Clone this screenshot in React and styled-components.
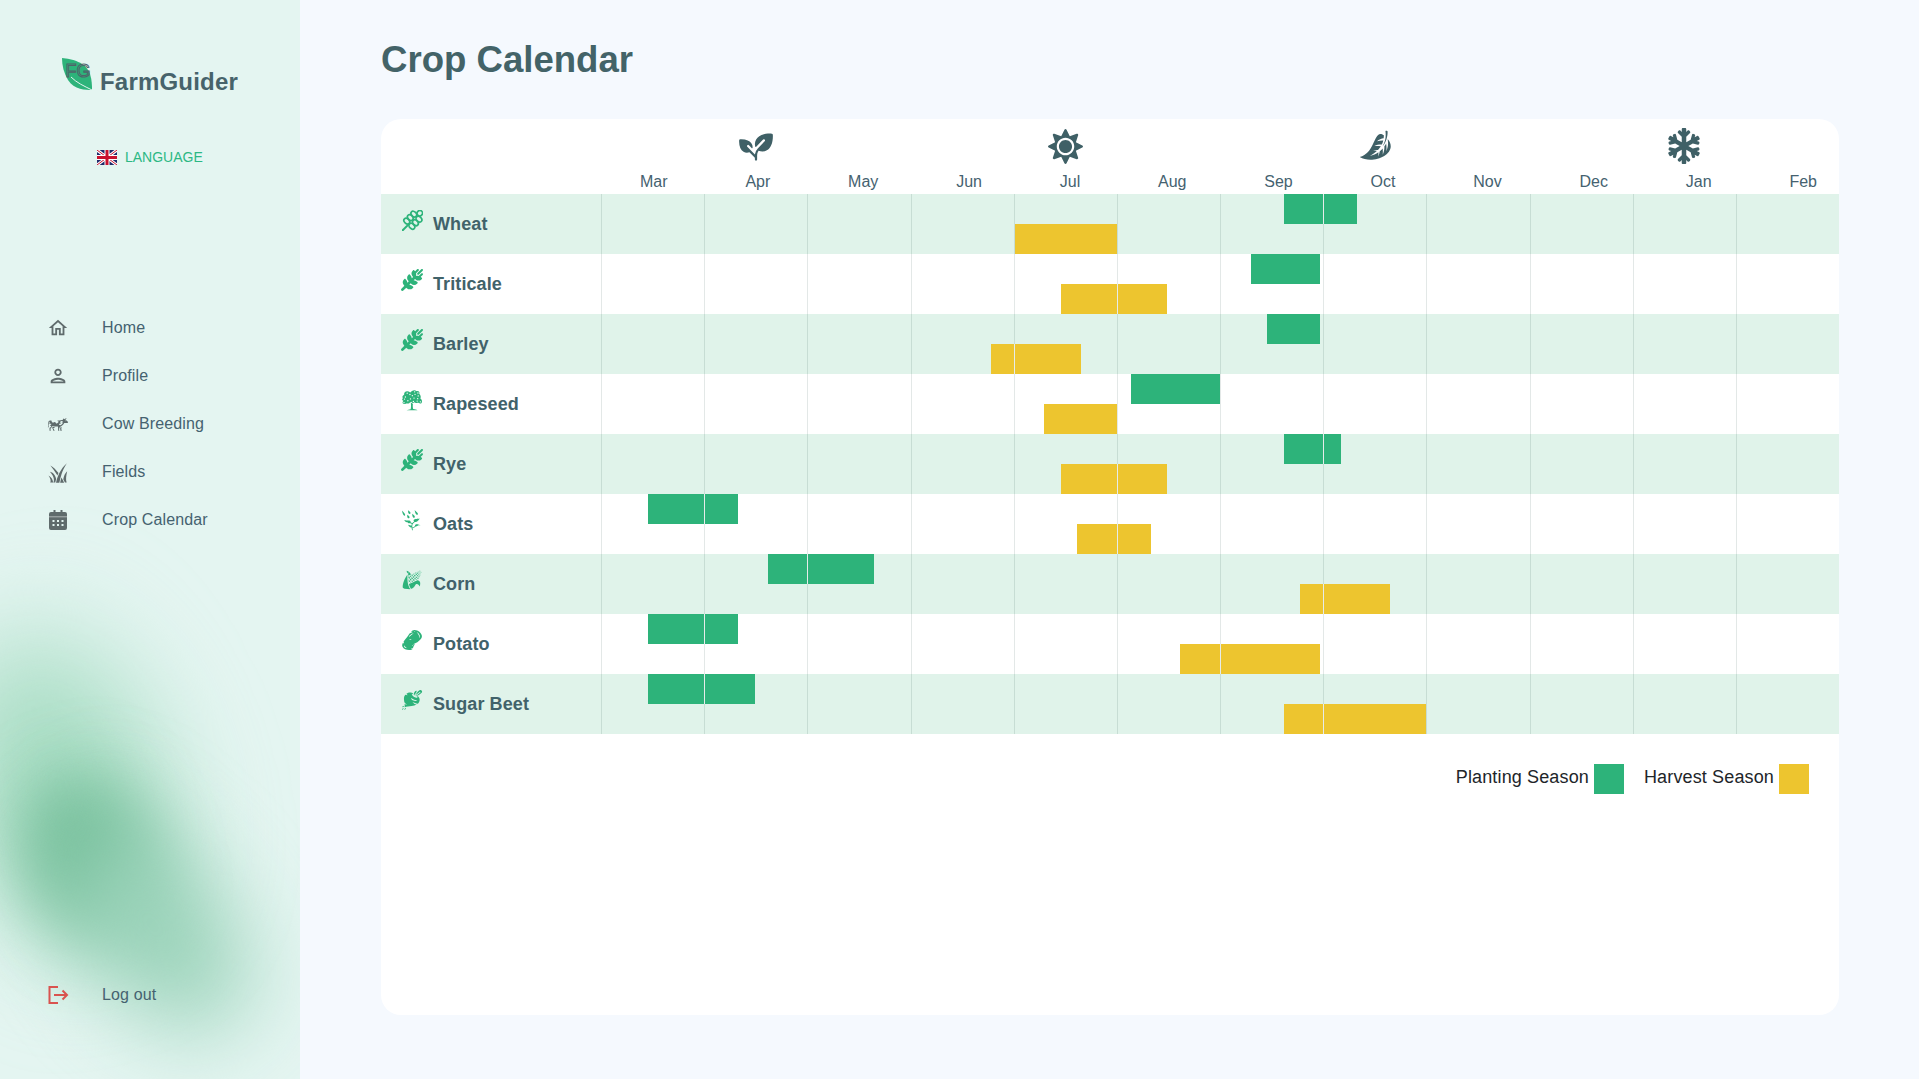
import React from 'react';
import styled, { createGlobalStyle } from 'styled-components';
import { GiCow, GiHighGrass, GiFruitTree, GiPlantWatering, GiCorn, GiPotato, GiBeet, GiFallingLeaf } from 'react-icons/gi';
import { FaSnowflake, FaSun } from 'react-icons/fa';
import { FaWheatAwn } from 'react-icons/fa6';
import { PiPlantFill } from 'react-icons/pi';
import { MdOutlineHome, MdOutlinePerson } from 'react-icons/md';

const GlobalStyle = createGlobalStyle`
  html, body { margin: 0; padding: 0; height: 100%; }
  body { background: #f5f9fe; font-family: "Liberation Sans", Arial, sans-serif; }
`;

const Page = styled.div`
  display: flex;
  width: 1919px;
  height: 1079px;
  overflow: hidden;
`;

const Sidebar = styled.aside`
  position: relative;
  flex: 0 0 300px;
  display: flex;
  flex-direction: column;
  height: 100%;
  box-sizing: border-box;
  padding-top: 58px;
  background: #e4f5f1;
  overflow: hidden;
`;

const Glow = styled.div`
  position: absolute;
  left: ${p => p.$x}px;
  top: ${p => p.$y}px;
  width: ${p => p.$w}px;
  height: ${p => p.$h}px;
  border-radius: 50%;
  background: ${p => p.$color};
  transform: rotate(${p => p.$rot}deg);
  filter: blur(${p => p.$blur}px);
`;

const Logo = styled.div`
  position: relative;
  display: flex;
  align-items: flex-end;
  gap: 8px;
  padding-left: 62px;
`;

const LogoMark = styled.svg`
  width: 30px;
  height: 32px;
  margin-bottom: 6px;
  flex: none;
`;

const LogoText = styled.span`
  font-size: 24px;
  font-weight: 700;
  letter-spacing: 0.2px;
  color: #47636b;
`;

const Language = styled.div`
  position: relative;
  display: flex;
  align-items: center;
  gap: 8px;
  margin-top: 53px;
  padding-left: 97px;
  font-size: 14px;
  line-height: 16px;
  color: #2cb884;
`;

const Nav = styled.nav`
  position: relative;
  display: flex;
  flex-direction: column;
  margin-top: 139px;
`;

const NavItem = styled.a`
  position: relative;
  display: flex;
  align-items: center;
  gap: 33px;
  height: 48px;
  padding-left: 47px;
  font-size: 16px;
  letter-spacing: 0.13px;
  color: #456270;
`;

const NavIcon = styled.span`
  display: flex;
  align-items: center;
  justify-content: center;
  width: 22px;
  height: 24px;
  color: ${p => p.$color || '#5f6b6c'};
`;

const LogoutItem = styled(NavItem)`
  margin-top: auto;
  margin-bottom: 60px;
`;

const Main = styled.main`
  flex: 1;
  min-width: 0;
  padding: 39px 80px 0 81px;
`;

const Title = styled.h1`
  margin: 0 0 39px;
  font-size: 36.6px;
  line-height: 41px;
  font-weight: 700;
  color: #436368;
`;

const Card = styled.section`
  display: flex;
  flex-direction: column;
  height: 896px;
  background: #fff;
  border-radius: 20px;
  overflow: hidden;
`;

const Head = styled.div`
  display: grid;
  grid-template-columns: 220px 1fr;
  height: 75px;
`;

const SeasonRow = styled.div`
  display: grid;
  grid-template-columns: repeat(4, 1fr);
  height: 36px;
  padding-top: 9px;
`;

const Season = styled.div`
  display: flex;
  align-items: center;
  justify-content: center;
  color: #3f6066;
`;

const MonthRow = styled.div`
  display: flex;
  justify-content: space-between;
  margin-top: 9px;
  padding: 0 22px 0 39px;
  font-size: 16px;
  line-height: 18px;
  color: #456270;
`;

const Row = styled.div`
  display: grid;
  grid-template-columns: 220px 1fr;
  height: 60px;
  background: ${p => (p.$shaded ? '#e0f3ea' : 'transparent')};
`;

const CropLabel = styled.div`
  display: flex;
  align-items: center;
  gap: 10px;
  padding-left: 20px;
  font-size: 18px;
  font-weight: 700;
  letter-spacing: 0.1px;
  color: #41626a;
`;

const CropIcon = styled.span`
  display: flex;
  align-items: center;
  justify-content: center;
  width: 22px;
  height: 22px;
  margin-bottom: 8px;
  color: #2db37a;
`;

const Timeline = styled.div`
  position: relative;
`;

const Lines = styled.div`
  position: absolute;
  inset: 0;
  display: grid;
  grid-template-columns: repeat(12, 1fr);
  padding-left: 0.1px;
`;

const LineCell = styled.div`
  border-left: 1px solid rgba(0, 50, 40, 0.11);
`;

const Lane = styled.div`
  position: relative;
  height: 30px;
`;

const Bar = styled.div`
  position: relative;
  height: 100%;
  background: ${p => (p.$kind === 'plant' ? '#2db37a' : '#edc52f')};
`;

const Tick = styled.i`
  position: absolute;
  top: 0;
  bottom: 0;
  width: 1px;
  background: #e6ecea;
`;

const Legend = styled.div`
  display: flex;
  justify-content: flex-end;
  gap: 20px;
  margin-top: 30px;
  padding-right: 30px;
`;

const LegendItem = styled.div`
  display: flex;
  align-items: flex-start;
  gap: 5px;
  font-size: 18px;
  line-height: 26px;
  letter-spacing: 0.14px;
  color: #212529;
`;

const Swatch = styled.span`
  width: 30px;
  height: 30px;
  background: ${p => (p.$kind === 'plant' ? '#2db37a' : '#edc52f')};
`;

const Flag = () => (
  <svg width="20" height="15" viewBox="0 0 60 45" aria-hidden="true">
    <rect width="60" height="45" fill="#1f2a6b" />
    <path d="M0 0L60 45M60 0L0 45" stroke="#fff" strokeWidth="9" />
    <path d="M0 0L60 45M60 0L0 45" stroke="#c8102e" strokeWidth="3" />
    <path d="M30 0V45M0 22.5H60" stroke="#fff" strokeWidth="15" />
    <path d="M30 0V45M0 22.5H60" stroke="#c8102e" strokeWidth="9" />
  </svg>
);

const WheatOutline = () => (
  <svg width="21" height="21" viewBox="0 0 21 21" fill="none" stroke="currentColor" strokeWidth="1.7" aria-hidden="true">
    <g transform="rotate(45 10.5 10.5)">
      <path d="M10.5 16V25" strokeLinecap="round" strokeWidth="2" />
      <ellipse cx="10.5" cy="0.2" rx="2.6" ry="2.8" />
      <ellipse cx="6.9" cy="5" rx="3.3" ry="2.4" />
      <ellipse cx="14.1" cy="5" rx="3.3" ry="2.4" />
      <ellipse cx="6.9" cy="10" rx="3.3" ry="2.4" />
      <ellipse cx="14.1" cy="10" rx="3.3" ry="2.4" />
      <ellipse cx="6.9" cy="15" rx="3.3" ry="2.4" />
      <ellipse cx="14.1" cy="15" rx="3.3" ry="2.4" />
    </g>
  </svg>
);

const CalendarIcon = () => (
  <svg width="18" height="20" viewBox="0 0 18 20" aria-hidden="true">
    <path fill="currentColor" d="M2 2h2.5V0h2v2h5V0h2v2H16a2 2 0 0 1 2 2v14a2 2 0 0 1-2 2H2a2 2 0 0 1-2-2V4a2 2 0 0 1 2-2Z" />
    <rect x="0" y="6.3" width="18" height="1" fill="#aeb6b6" />
    <g fill="#e4f5f1">
      <rect x="3.5" y="10" width="2" height="2" /><rect x="8" y="10" width="2" height="2" /><rect x="12.5" y="10" width="2" height="2" />
      <rect x="3.5" y="14" width="2" height="2" /><rect x="8" y="14" width="2" height="2" /><rect x="12.5" y="14" width="2" height="2" />
    </g>
  </svg>
);

const LogoutIcon = () => (
  <svg width="22" height="20" viewBox="0 0 22 20" fill="none" stroke="#d9534f" strokeWidth="2" aria-hidden="true">
    <path d="M11 2H2.5v16H11" />
    <path d="M7 10h13M15.5 5.5L20 10l-4.5 4.5" />
  </svg>
);

const MONTHS = ['Mar', 'Apr', 'May', 'Jun', 'Jul', 'Aug', 'Sep', 'Oct', 'Nov', 'Dec', 'Jan', 'Feb'];
const STEP = 1238 / 12;

const CROPS = [
  { name: 'Wheat', icon: <WheatOutline />, plant: [1284, 1357], harvest: [1015, 1117] },
  { name: 'Triticale', icon: <FaWheatAwn size={22} />, plant: [1251, 1320], harvest: [1061, 1167] },
  { name: 'Barley', icon: <FaWheatAwn size={22} />, plant: [1267, 1320], harvest: [991, 1081] },
  { name: 'Rapeseed', icon: <GiFruitTree size={22} />, plant: [1131, 1220], harvest: [1044, 1117] },
  { name: 'Rye', icon: <FaWheatAwn size={22} />, plant: [1284, 1341], harvest: [1061, 1167] },
  { name: 'Oats', icon: <GiPlantWatering size={22} />, plant: [648, 738], harvest: [1077, 1151] },
  { name: 'Corn', icon: <GiCorn size={22} />, plant: [768, 874], harvest: [1300, 1390] },
  { name: 'Potato', icon: <GiPotato size={22} />, plant: [648, 738], harvest: [1180, 1320] },
  { name: 'Sugar Beet', icon: <GiBeet size={22} />, plant: [648, 755], harvest: [1284, 1426] },
];

const NAV = [
  { label: 'Home', icon: <MdOutlineHome size={24} /> },
  { label: 'Profile', icon: <MdOutlinePerson size={24} /> },
  { label: 'Cow Breeding', icon: <GiCow size={25} /> },
  { label: 'Fields', icon: <GiHighGrass size={23} /> },
  { label: 'Crop Calendar', icon: <CalendarIcon /> },
];

const ORIGIN = 601;

function SeasonBar({ kind, range }) {
  const left = range[0] - ORIGIN;
  const width = range[1] - range[0];
  const ticks = MONTHS.map((_, i) => Math.round(i * STEP + 0.001)).filter(x => x > left && x < left + width);
  return (
    <Lane>
      <Bar $kind={kind} style={{ marginLeft: left, width }}>
        {ticks.map(x => <Tick key={x} style={{ left: x - left }} />)}
      </Bar>
    </Lane>
  );
}

export default function App() {
  return (
    <Page>
      <GlobalStyle />
      <Sidebar>
        <Glow $x={-40} $y={630} $w={200} $h={320} $rot={-18} $color="#a6dcc2" $blur={55} />
        <Glow $x={33} $y={780} $w={110} $h={150} $rot={-20} $color="#62b48a" $blur={36} />
        <Glow $x={85} $y={800} $w={135} $h={250} $rot={-38} $color="#97d1b7" $blur={46} />
        <Logo>
          <LogoMark viewBox="0 0 30 32" aria-hidden="true">
            <path fill="#2db37a" d="M0 0C10 1 24 4 28 16C30 22 30 28 30 32C24 32 12 32 6 22C2 15 0 8 0 0Z" />
            <path fill="none" stroke="#e4f5f1" strokeWidth="1" d="M9 19C15 25 22 28 30 32" />
            <text x="3.5" y="19" fontFamily="Liberation Sans, sans-serif" fontSize="18" fill="none" stroke="#50646a" strokeWidth="1">FG</text>
          </LogoMark>
          <LogoText>FarmGuider</LogoText>
        </Logo>
        <Language><Flag />LANGUAGE</Language>
        <Nav>
          {NAV.map(item => (
            <NavItem key={item.label}>
              <NavIcon>{item.icon}</NavIcon>
              {item.label}
            </NavItem>
          ))}
        </Nav>
        <LogoutItem>
          <NavIcon $color="#d9534f"><LogoutIcon /></NavIcon>
          Log out
        </LogoutItem>
      </Sidebar>
      <Main>
        <Title>Crop Calendar</Title>
        <Card>
          <Head>
            <div />
            <div>
              <SeasonRow>
                <Season><PiPlantFill size={36} /></Season>
                <Season><FaSun size={35} /></Season>
                <Season><GiFallingLeaf size={34} /></Season>
                <Season><FaSnowflake size={36} /></Season>
              </SeasonRow>
              <MonthRow>{MONTHS.map(m => <span key={m}>{m}</span>)}</MonthRow>
            </div>
          </Head>
          {CROPS.map((crop, i) => (
            <Row key={crop.name} $shaded={i % 2 === 0}>
              <CropLabel>
                <CropIcon>{crop.icon}</CropIcon>
                {crop.name}
              </CropLabel>
              <Timeline>
                <Lines>{MONTHS.map(m => <LineCell key={m} />)}</Lines>
                <SeasonBar kind="plant" range={crop.plant} />
                <SeasonBar kind="harvest" range={crop.harvest} />
              </Timeline>
            </Row>
          ))}
          <Legend>
            <LegendItem>Planting Season<Swatch $kind="plant" /></LegendItem>
            <LegendItem>Harvest Season<Swatch $kind="harvest" /></LegendItem>
          </Legend>
        </Card>
      </Main>
    </Page>
  );
}
